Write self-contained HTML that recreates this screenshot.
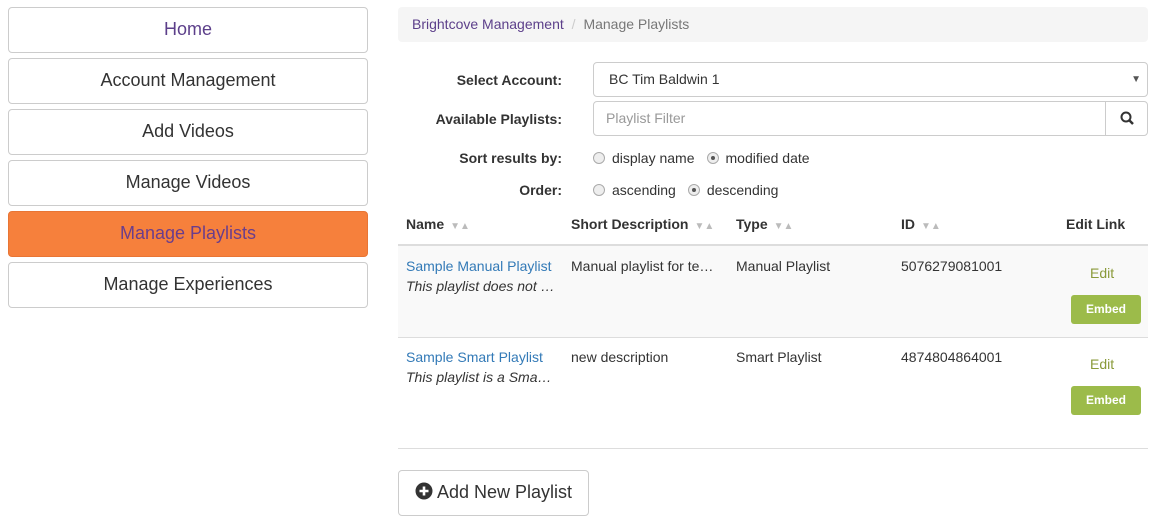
<!DOCTYPE html>
<html><head><style>
*{box-sizing:border-box}
body{margin:0;width:1159px;height:525px;background:#fff;font-family:"Liberation Sans",sans-serif;color:#333;position:relative;overflow:hidden;font-size:14px}
.a{position:absolute}
.nb{position:absolute;left:8px;width:360px;height:46px;border:1px solid #ccc;border-radius:4px;background:#fff;font-size:18px;text-align:center;line-height:43px;color:#333}
.lbl{position:absolute;right:597px;font-weight:bold;font-size:14px}
.rad{display:inline-block;width:12px;height:12px;border:1px solid #aaa;border-radius:50%;background:#eee;vertical-align:-1px;margin-right:7px;position:relative}
.rad.on::after{content:"";position:absolute;left:3px;top:3px;width:4px;height:4px;border-radius:50%;background:#555}
.sp{display:inline-block;width:12px}
.th{position:absolute;top:216px;font-weight:bold;font-size:14px}
.srt{color:#bbb;font-size:10px;font-weight:normal;margin-left:6px}
.emb{position:absolute;left:1071px;width:70px;height:29px;background:#9cbb4a;border-radius:3px;color:#fff;font-weight:bold;font-size:12px;text-align:center;line-height:29px}
.ed{position:absolute;left:1090px;color:#8a9a3a;font-size:14px}
.lk{color:#337ab7}
i{font-style:italic}
</style></head><body>
<div class="nb" style="top:7px;color:#5c3f8a">Home</div>
<div class="nb" style="top:58px">Account Management</div>
<div class="nb" style="top:109px">Add Videos</div>
<div class="nb" style="top:160px">Manage Videos</div>
<div class="nb" style="top:211px;background:#f6803c;border-color:#e87535;color:#6a3d8c">Manage Playlists</div>
<div class="nb" style="top:262px">Manage Experiences</div>

<div class="a" style="left:398px;top:7px;width:750px;height:35px;background:#f5f5f5;border-radius:4px;line-height:35px;padding-left:14px"><span style="color:#5c3f8a">Brightcove Management</span> <span style="color:#ccc;padding:0 4px">/</span> <span style="color:#777">Manage Playlists</span></div>

<div class="lbl" style="top:72px">Select Account:</div>
<div class="a" style="left:593px;top:62px;width:555px;height:35px;border:1px solid #ccc;border-radius:4px;line-height:33px;padding-left:15px">BC Tim Baldwin 1<span style="position:absolute;right:6px;font-size:10px;color:#555">▼</span></div>
<div class="lbl" style="top:111px">Available Playlists:</div>
<div class="a" style="left:593px;top:101px;width:513px;height:35px;border:1px solid #ccc;border-radius:4px 0 0 4px;line-height:33px;padding-left:12px;color:#999">Playlist Filter</div>
<div class="a" style="left:1105px;top:101px;width:43px;height:35px;border:1px solid #ccc;border-radius:0 4px 4px 0">
<svg width="41" height="33" viewBox="0 0 41 33"><circle cx="20" cy="15" r="4.5" fill="none" stroke="#333" stroke-width="2"/><path d="M23 18l4 4" stroke="#333" stroke-width="2.5"/></svg></div>

<div class="lbl" style="top:150px">Sort results by:</div>
<div class="a" style="left:593px;top:150px"><span class="rad"></span>display name<span class="sp"></span><span class="rad on"></span>modified date</div>
<div class="lbl" style="top:182px">Order:</div>
<div class="a" style="left:593px;top:182px"><span class="rad"></span>ascending<span class="sp"></span><span class="rad on"></span>descending</div>

<div class="th" style="left:406px">Name<span class="srt">▼▲</span></div>
<div class="th" style="left:571px">Short Description<span class="srt">▼▲</span></div>
<div class="th" style="left:736px">Type<span class="srt">▼▲</span></div>
<div class="th" style="left:901px">ID<span class="srt">▼▲</span></div>
<div class="th" style="left:1066px">Edit Link</div>
<div class="a" style="left:398px;top:244px;width:750px;height:2px;background:#ddd"></div>
<div class="a" style="left:398px;top:246px;width:750px;height:91px;background:#f9f9f9"></div>
<div class="a" style="left:398px;top:337px;width:750px;height:1px;background:#ddd"></div>
<div class="a" style="left:398px;top:448px;width:750px;height:1px;background:#ddd"></div>

<div class="a lk" style="left:406px;top:258px">Sample Manual Playlist</div>
<div class="a" style="left:406px;top:278px"><i>This playlist does not …</i></div>
<div class="a" style="left:571px;top:258px">Manual playlist for te…</div>
<div class="a" style="left:736px;top:258px">Manual Playlist</div>
<div class="a" style="left:901px;top:258px">5076279081001</div>
<div class="ed" style="top:265px">Edit</div>
<div class="emb" style="top:295px">Embed</div>

<div class="a lk" style="left:406px;top:349px">Sample Smart Playlist</div>
<div class="a" style="left:406px;top:369px"><i>This playlist is a Sma…</i></div>
<div class="a" style="left:571px;top:349px">new description</div>
<div class="a" style="left:736px;top:349px">Smart Playlist</div>
<div class="a" style="left:901px;top:349px">4874804864001</div>
<div class="ed" style="top:356px">Edit</div>
<div class="emb" style="top:386px">Embed</div>

<div class="a" style="left:398px;top:470px;width:191px;height:46px;border:1px solid #ccc;border-radius:4px;font-size:18px;line-height:43px;padding-left:16px">
<svg width="18" height="18" viewBox="0 0 18 18" style="vertical-align:-2px"><circle cx="9" cy="9" r="8.5" fill="#333"/><path d="M9 4.5v9M4.5 9h9" stroke="#fff" stroke-width="2.6"/></svg> Add New Playlist</div>
</body></html>
